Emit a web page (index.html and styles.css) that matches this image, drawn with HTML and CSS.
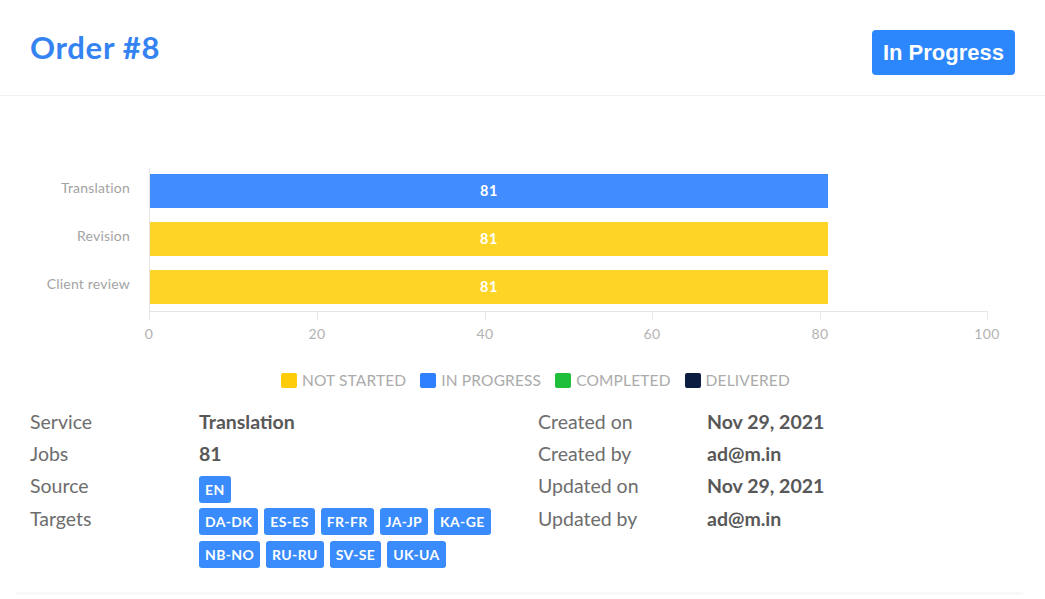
FILE: index.html
```html
<!DOCTYPE html>
<html lang="en">
<head>
<meta charset="utf-8">
<title>Order #8</title>
<link rel="stylesheet" href="styles.css">
</head>
<body>
<div class="card">
  <header class="card-header">
    <h1 class="title">Order #8</h1>
    <span class="status">In Progress</span>
  </header>

  <svg class="chart" width="1045" height="264" viewBox="0 0 1045 264" xmlns="http://www.w3.org/2000/svg">
    <g class="grid">
      <line x1="149.5" y1="72" x2="149.5" y2="224"/>
      <line x1="149" y1="215.5" x2="988" y2="215.5"/>
      <line x1="317.5" y1="215" x2="317.5" y2="224"/>
      <line x1="485.5" y1="215" x2="485.5" y2="224"/>
      <line x1="652.5" y1="215" x2="652.5" y2="224"/>
      <line x1="820.5" y1="215" x2="820.5" y2="224"/>
      <line x1="987.5" y1="215" x2="987.5" y2="224"/>
    </g>
    <g class="ylabels">
      <text x="130" y="97">Translation</text>
      <text x="130" y="145">Revision</text>
      <text x="130" y="193">Client review</text>
    </g>
    <rect x="150" y="78" width="678" height="34" fill="#418cff"/>
    <rect x="150" y="126" width="678" height="34" fill="#fed526"/>
    <rect x="150" y="174" width="678" height="34" fill="#fed526"/>
    <g class="barlabels">
      <text x="489" y="100">81</text>
      <text x="489" y="148">81</text>
      <text x="489" y="196">81</text>
    </g>
    <g class="xlabels">
      <text x="149" y="243">0</text>
      <text x="317" y="243">20</text>
      <text x="485" y="243">40</text>
      <text x="652" y="243">60</text>
      <text x="820" y="243">80</text>
      <text x="987" y="243">100</text>
    </g>
  </svg>

  <ul class="legend">
    <li class="legend-item"><span class="swatch swatch-yellow"></span>NOT STARTED</li>
    <li class="legend-item"><span class="swatch swatch-blue"></span>IN PROGRESS</li>
    <li class="legend-item"><span class="swatch swatch-green"></span>COMPLETED</li>
    <li class="legend-item"><span class="swatch swatch-navy"></span>DELIVERED</li>
  </ul>

  <div class="details">
    <div class="label">Service</div>
    <div class="value">Translation</div>
    <div class="label">Created on</div>
    <div class="value">Nov 29, 2021</div>

    <div class="label">Jobs</div>
    <div class="value">81</div>
    <div class="label">Created by</div>
    <div class="value">ad@m.in</div>

    <div class="label">Source</div>
    <div class="tags tags-source"><span class="tag">EN</span></div>
    <div class="label">Updated on</div>
    <div class="value">Nov 29, 2021</div>

    <div class="label">Targets</div>
    <div class="tags">
      <span class="tag">DA-DK</span>
      <span class="tag">ES-ES</span>
      <span class="tag">FR-FR</span>
      <span class="tag">JA-JP</span>
      <span class="tag">KA-GE</span>
      <span class="tag">NB-NO</span>
      <span class="tag">RU-RU</span>
      <span class="tag">SV-SE</span>
      <span class="tag">UK-UA</span>
    </div>
    <div class="label">Updated by</div>
    <div class="value">ad@m.in</div>
  </div>
  <div class="card-foot"></div>
</div>
</body>
</html>
```

FILE: styles.css
```css
* { box-sizing: border-box; }

html, body {
  margin: 0;
  padding: 0;
  background: #ffffff;
}

body {
  font-family: Lato, "Open Sans", "Noto Sans", sans-serif;
  color: #555;
  width: 1045px;
  height: 599px;
  overflow: hidden;
}

.card {
  width: 1045px;
}

.card-header {
  height: 96px;
  border-bottom: 1px solid #f0f0f0;
  display: flex;
  justify-content: space-between;
  align-items: flex-start;
  padding: 30px 30px 0 30px;
}

.title {
  margin: 0;
  font-family: Lato, sans-serif;
  font-weight: 700;
  font-size: 31px;
  line-height: 34px;
  color: #3583f2;
  letter-spacing: 0.7px;
}

.status {
  background: #2c87fd;
  color: #fff;
  font-family: "Liberation Sans", Arial, sans-serif;
  font-weight: 700;
  font-size: 22px;
  line-height: 45px;
  height: 45px;
  padding: 0 11px;
  border-radius: 4px;
}

.chart {
  display: block;
}

.chart .grid line {
  stroke: #e6e6e6;
  stroke-width: 1;
}

.chart text {
  font-family: Lato, sans-serif;
}

.ylabels text {
  font-size: 14px;
  fill: #a3a3a3;
  text-anchor: end;
  letter-spacing: 0.2px;
}

.barlabels text {
  font-size: 14.5px;
  font-weight: 700;
  fill: #ffffff;
  text-anchor: middle;
  letter-spacing: 0.5px;
}

.xlabels text {
  font-size: 14px;
  fill: #b3b3b3;
  text-anchor: middle;
  letter-spacing: 0.3px;
}

.legend {
  list-style: none;
  margin: 10px 0 0 0;
  padding: 0 0 0 281px;
  height: 20px;
  display: flex;
  align-items: center;
  gap: 14px;
}

.legend-item {
  display: flex;
  align-items: center;
  gap: 5px;
  font-size: 15.5px;
  color: #ababab;
  line-height: 20px;
  letter-spacing: 0.15px;
}

.swatch {
  width: 16px;
  height: 15px;
  border-radius: 2px;
  display: inline-block;
}

.swatch-yellow { background: #ffcc0a; }
.swatch-blue { background: #2f80ff; }
.swatch-green { background: #1fbf3c; }
.swatch-navy { background: #0c1d42; }

.details {
  margin: 16px 0 0 30px;
  display: grid;
  grid-template-columns: 169px 339px 169px 1fr;
  align-items: start;
}

.label {
  font-size: 19.5px;
  line-height: 32px;
  color: #6d6d6d;
}

.value {
  font-size: 19.5px;
  line-height: 32px;
  font-weight: 700;
  color: #585858;
}

.tags {
  display: flex;
  flex-wrap: wrap;
  gap: 6px;
  padding-top: 5px;
  max-width: 300px;
}

.tags-source {
  padding-top: 6px;
}

.tag {
  background: #3a8bfb;
  color: #fff;
  font-family: Lato, sans-serif;
  font-weight: 700;
  font-size: 14px;
  letter-spacing: 0.35px;
  height: 27px;
  line-height: 27px;
  padding: 0 6px;
  border-radius: 3px;
}

.card-foot {
  margin: 24px 22px 0 16px;
  height: 3px;
  background: #f8f9f9;
}
```
